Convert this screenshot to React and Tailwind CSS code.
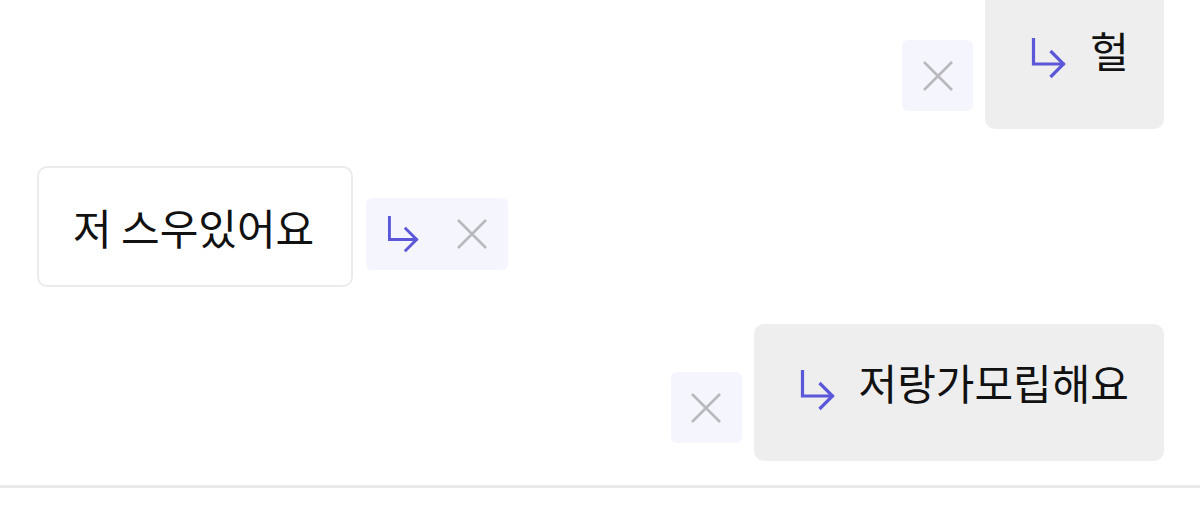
const font = { fontFamily: '"Noto Sans CJK KR", "Noto Sans", sans-serif' };

function ReplyArrow({ className = '' }) {
  return (
    <svg viewBox="0 0 36 42" className={className} fill="none" stroke="#5b57d9" strokeWidth="3.2">
      <path d="M3 1 V27 H34" />
      <path d="M20 14 L33 27 L20 40" />
    </svg>
  );
}

function CloseIcon({ className = '' }) {
  return (
    <svg viewBox="0 0 32 32" className={className} fill="none" stroke="#b9b9bd" strokeWidth="2.6">
      <path d="M2 2 L30 30 M30 2 L2 30" />
    </svg>
  );
}

function CloseButton() {
  return (
    <button className="mb-[18px] flex h-[71px] w-[71px] shrink-0 items-center justify-center rounded-md bg-[#f5f5fd]">
      <CloseIcon className="h-8 w-8" />
    </button>
  );
}

function ReplyBubble({ text }) {
  return (
    <div className="flex h-[137px] items-start rounded-[10px] bg-[#eeeeee] pl-[45px] pr-[35px] pt-[34px]">
      <ReplyArrow className="mr-[23px] mt-[11px] h-[42px] w-[37px] shrink-0" />
      <span className="text-[42px] leading-[48px] text-[#111]">{text}</span>
    </div>
  );
}

export default function App() {
  return (
    <div className="h-[511px] w-[1200px] overflow-hidden bg-white" style={font}>
      <div className="-mt-[8px] flex flex-col gap-[37px] pl-[37px] pr-[36px]">
        <div className="flex items-end justify-end gap-3">
          <CloseButton />
          <ReplyBubble text="헐" />
        </div>

        <div className="flex items-end gap-[13px]">
          <div className="flex h-[121px] items-center rounded-[10px] border-2 border-[#ebebeb] bg-white pl-[34px] pr-[37px]">
            <span className="text-[42px] leading-[48px] text-[#111]">저 스우있어요</span>
          </div>
          <div className="mb-[17px] flex h-[72px] items-center gap-[36px] rounded-md bg-[#f5f5fd] pl-[20px] pr-[20px]">
            <ReplyArrow className="h-[38px] w-[34px]" />
            <CloseIcon className="h-8 w-8" />
          </div>
        </div>

        <div className="flex items-end justify-end gap-3">
          <CloseButton />
          <ReplyBubble text="저랑가모립해요" />
        </div>
      </div>
      <div className="mt-[24px] h-[3px] w-full bg-[#e9e9e9]" />
    </div>
  );
}
